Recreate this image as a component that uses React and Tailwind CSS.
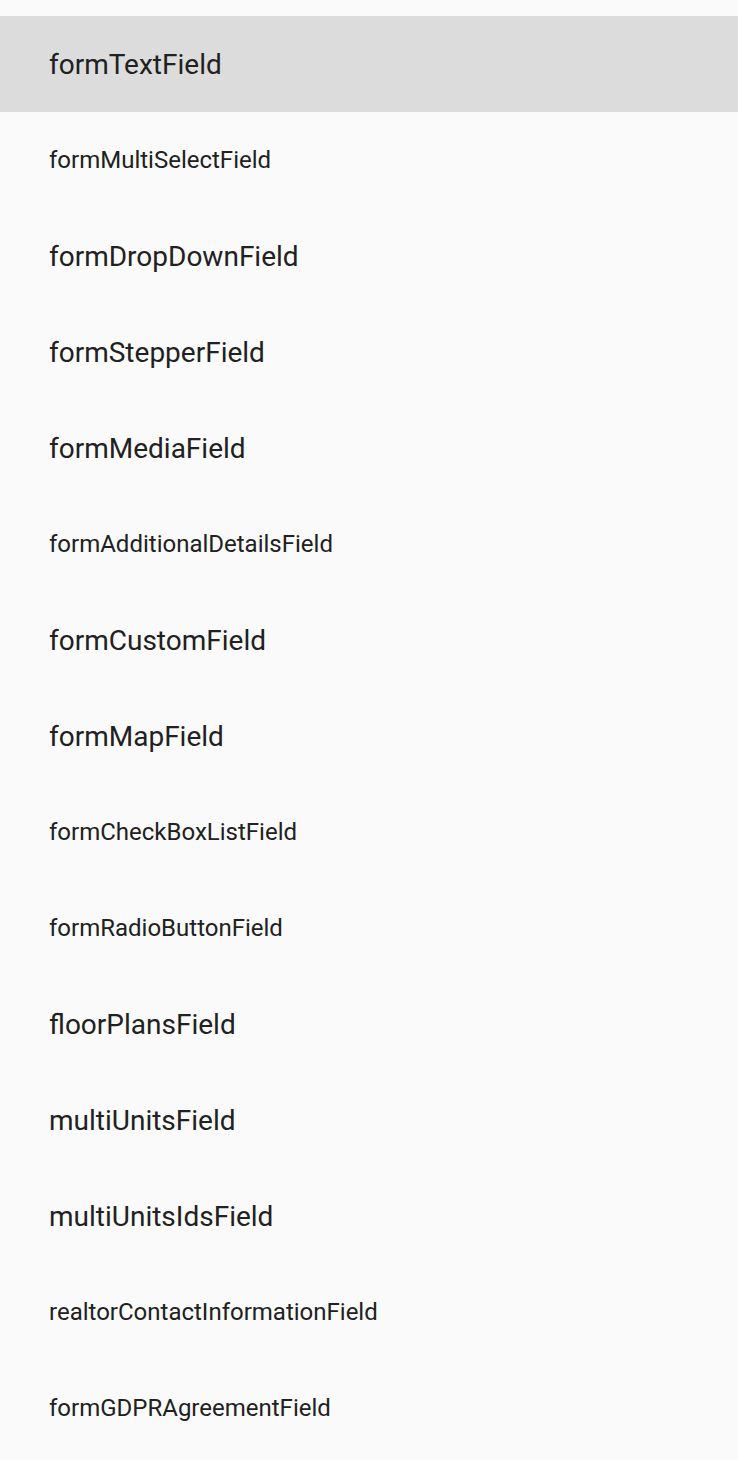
import React from "react";

const items = [
  ["formTextField", true],
  ["formMultiSelectField", false],
  ["formDropDownField", true],
  ["formStepperField", true],
  ["formMediaField", true],
  ["formAdditionalDetailsField", false],
  ["formCustomField", true],
  ["formMapField", true],
  ["formCheckBoxListField", false],
  ["formRadioButtonField", false],
  ["floorPlansField", true],
  ["multiUnitsField", true],
  ["multiUnitsIdsField", true],
  ["realtorContactInformationField", false],
  ["formGDPRAgreementField", false],
];

export default function App() {
  return (
    <div className="min-h-[1460px] w-full bg-[#fafafa] pt-4" style={{ fontFamily: "Roboto, 'Noto Sans', sans-serif" }}>
      <ul>
        {items.map(([label, big], i) => (
          <li
            key={label}
            className={`flex h-[96px] items-center pl-[49px] text-[#212121] ${i === 0 ? "bg-[#dcdcdc]" : ""} ${big ? "pt-[2px] text-[28px]" : "text-[24px]"}`}
          >
            {label}
          </li>
        ))}
      </ul>
    </div>
  );
}
